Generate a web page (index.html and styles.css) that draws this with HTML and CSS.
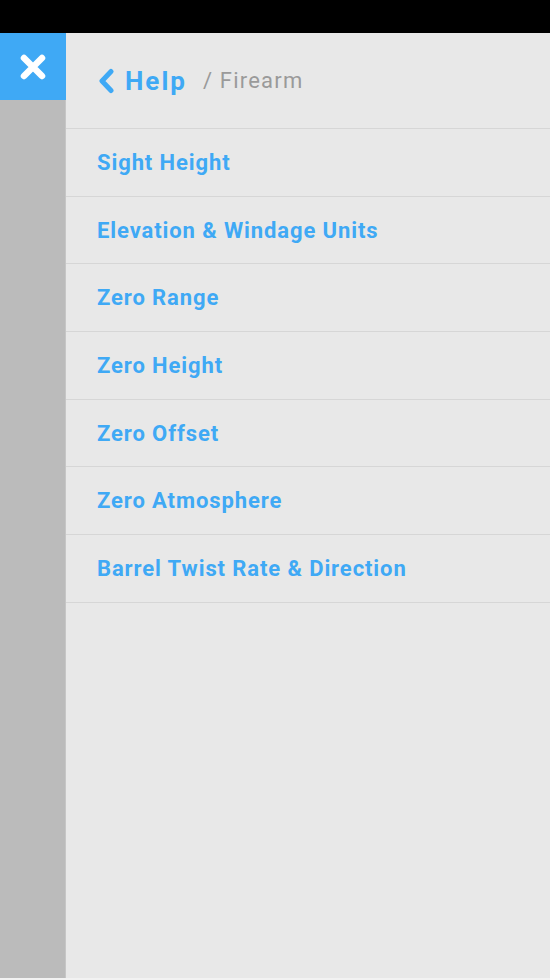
FILE: index.html
```html
<!DOCTYPE html>
<html>
<head>
<meta charset="utf-8">
<link rel="stylesheet" href="styles.css">
</head>
<body>
<div class="statusbar"></div>
<div class="app">
  <aside class="sidebar">
    <button class="close" aria-label="Close">
      <svg width="30" height="30" viewBox="0 0 30 30"><path d="M6 6 L24 24 M24 6 L6 24" stroke="#fff" stroke-width="6.5" stroke-linecap="round"/></svg>
    </button>
  </aside>
  <main class="panel">
    <header class="head">
      <span class="back">
        <svg width="18" height="26" viewBox="0 0 18 26"><path d="M14 3.5 L5 13 L14 22.5" fill="none" stroke="#3fa9f5" stroke-width="5" stroke-linecap="round" stroke-linejoin="round"/></svg>
        <span class="help">Help</span>
      </span>
      <span class="crumb">/ Firearm</span>
    </header>
    <ul class="list">
      <li>Sight Height</li>
      <li>Elevation &amp; Windage Units</li>
      <li>Zero Range</li>
      <li>Zero Height</li>
      <li>Zero Offset</li>
      <li>Zero Atmosphere</li>
      <li>Barrel Twist Rate &amp; Direction</li>
    </ul>
  </main>
</div>
</body>
</html>
```

FILE: styles.css
```css
* { box-sizing: border-box; }
html, body { margin: 0; padding: 0; }
body {
  width: 550px;
  height: 980px;
  overflow: hidden;
  background: #e8e8e8;
  font-family: Roboto, "Liberation Sans", sans-serif;
  display: flex;
  flex-direction: column;
}
.statusbar {
  height: 33px;
  background: #000;
  flex: none;
}
.app {
  flex: 1;
  display: flex;
  border-bottom: 2px solid #f2f2f2;
}
.sidebar {
  width: 66px;
  flex: none;
  background: #bbbbbb;
  border-right: 1px solid #c6c6c6;
}
.close {
  display: flex;
  align-items: center;
  justify-content: center;
  width: 66px;
  height: 67px;
  background: #3fa9f5;
  border: 0;
  padding: 0;
  margin: 0;
}
.panel {
  flex: 1;
  background: #e8e8e8;
}
.head {
  height: 96px;
  display: flex;
  align-items: center;
  padding-left: 31px;
  border-bottom: 1px solid #d6d6d6;
}
.back {
  display: flex;
  align-items: center;
  gap: 10px;
  color: #3fa9f5;
}
.help {
  font-size: 26px;
  font-weight: 700;
  letter-spacing: 2px;
}
.crumb {
  margin-left: 16px;
  font-size: 22px;
  color: #9a9a9a;
  letter-spacing: 1.2px;
}
.list {
  list-style: none;
  margin: 0;
  padding: 0;
}
.list li {
  height: 67.7px;
  display: flex;
  align-items: center;
  padding-left: 31px;
  border-bottom: 1px solid #d6d6d6;
  color: #3fa9f5;
  font-size: 22px;
  font-weight: 700;
  letter-spacing: 0.9px;
}
```
